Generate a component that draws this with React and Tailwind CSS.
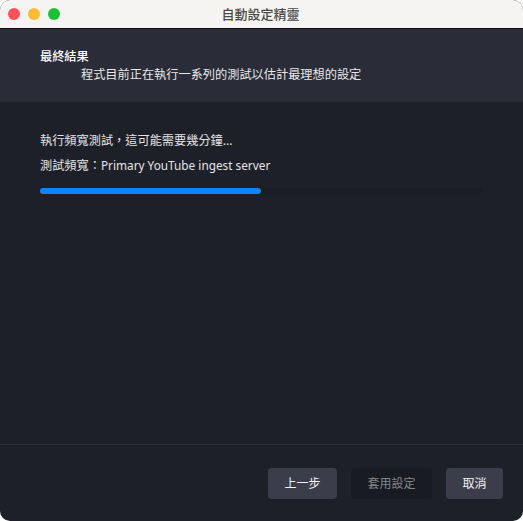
import React from 'react';

const font = { fontFamily: '"Noto Sans", "Noto Sans CJK TC", sans-serif' };

const Light = ({ color }) => <span className={`w-3 h-3 rounded-full ${color}`}></span>;

export default function App() {
  return (
    <div
      lang="zh-TW"
      style={font}
      className="w-[523px] h-[521px] bg-white overflow-hidden"
    >
      <div className="w-full h-full flex flex-col rounded-[10px] overflow-hidden bg-[#1e2029]">
        {/* title bar */}
        <div className="relative h-[29px] shrink-0 flex items-center justify-center bg-[#f6f4f2] border-b border-[#111111]">
          <div className="absolute left-[8px] top-[8px] flex gap-2">
            <Light color="bg-[#ff5257]" />
            <Light color="bg-[#febb2e]" />
            <Light color="bg-[#1ac231]" />
          </div>
          <span className="text-[13px] font-medium leading-none text-[#4b4947] -ml-[2px]">自動設定精靈</span>
        </div>

        {/* header */}
        <div className="h-[74px] shrink-0 pl-10 pt-[19px] bg-[#2a2c37] border-b-2 border-[#23252f] text-[12.2px] text-white">
          <div className="h-[18px] leading-[18px] font-medium">最終結果</div>
          <div className="h-[18px] leading-[18px] pl-[41px] text-[#e8e8ea]">程式目前正在執行一系列的測試以估計最理想的設定</div>
        </div>

        {/* body */}
        <div className="flex-1 pl-10 pr-[41px] pt-[29px] text-[12.2px] text-[#e4e4e6]">
          <div className="h-[18px] leading-[18px]">執行頻寬測試，這可能需要幾分鐘...</div>
          <div className="h-[18px] leading-[18px] mt-[6px]">
            測試頻寬：<span className="text-[11.8px]">Primary YouTube ingest server</span>
          </div>
          <div className="h-[6px] mt-[14px] rounded-[3px] bg-[#1b1d25]">
            <div className="h-full rounded-[3px] bg-[#0d84ff]" style={{ width: '50%' }}></div>
          </div>
        </div>

        {/* footer */}
        <div className="h-[77px] shrink-0 flex justify-end items-start gap-[14px] pt-[23px] pr-5 border-t border-[#2a2c37] text-xs">
          <button className="w-[69px] h-[31px] rounded bg-[#3b3e4a] text-[#f2f2f3]">上一步</button>
          <button className="w-[81px] h-[31px] rounded bg-[#191b23] text-[#85868c]">套用設定</button>
          <button className="w-[57px] h-[31px] rounded bg-[#3b3e4a] text-[#f2f2f3]">取消</button>
        </div>
      </div>
    </div>
  );
}
